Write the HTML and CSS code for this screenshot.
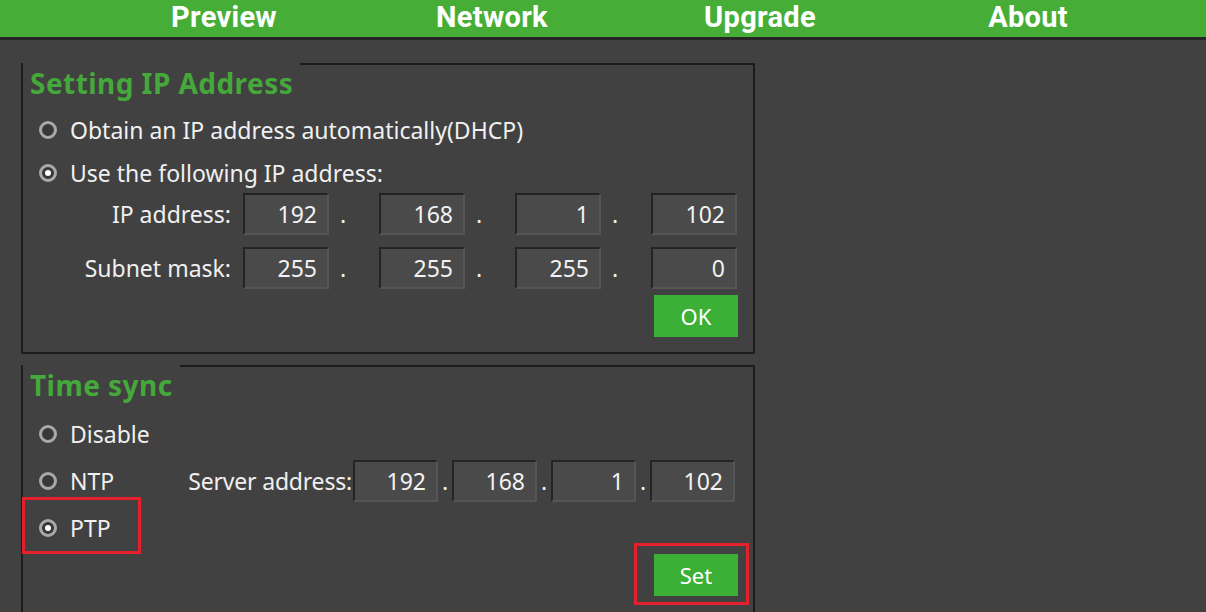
FILE: index.html
```html
<!DOCTYPE html>
<html>
<head>
<meta charset="utf-8">
<link rel="stylesheet" href="styles.css">
</head>
<body>
<header class="topbar">
  <nav class="nav">
    <span class="nav-item">Preview</span>
    <span class="nav-item">Network</span>
    <span class="nav-item">Upgrade</span>
    <span class="nav-item">About</span>
  </nav>
</header>
<main class="main">
  <section class="group group-ip">
    <div class="legend"><span class="legend-title">Setting IP Address</span><span class="legend-line"></span></div>
    <div class="radio-row first"><span class="radio"></span><span>Obtain an IP address automatically(DHCP)</span></div>
    <div class="radio-row"><span class="radio checked"></span><span>Use the following IP address:</span></div>
    <div class="ip-grid">
      <span class="ip-label">IP address:</span>
      <span class="field">192</span><span class="dot">.</span>
      <span class="field">168</span><span class="dot">.</span>
      <span class="field">1</span><span class="dot">.</span>
      <span class="field">102</span>
      <span class="ip-label">Subnet mask:</span>
      <span class="field">255</span><span class="dot">.</span>
      <span class="field">255</span><span class="dot">.</span>
      <span class="field">255</span><span class="dot">.</span>
      <span class="field">0</span>
    </div>
    <div class="btn-row"><span class="btn">OK</span></div>
  </section>
  <section class="group group-time">
    <div class="legend"><span class="legend-title">Time sync</span><span class="legend-line"></span></div>
    <div class="radio-row tall first"><span class="radio"></span><span>Disable</span></div>
    <div class="radio-row tall">
      <span class="radio-opt fixed"><span class="radio"></span><span>NTP</span></span>
      <span class="server-label">Server address:</span>
      <span class="server-fields">
        <span class="field small">192</span><span class="sdot">.</span>
        <span class="field small">168</span><span class="sdot">.</span>
        <span class="field small">1</span><span class="sdot">.</span>
        <span class="field small">102</span>
      </span>
    </div>
    <div class="radio-row tall"><span class="radio-opt mark-ptp"><span class="radio checked"></span><span>PTP</span></span></div>
    <div class="btn-row set-row"><span class="btn mark-set">Set</span></div>
  </section>
</main>
</body>
</html>
```
FILE: styles.css
```css
* { box-sizing: border-box; }
html, body { margin: 0; padding: 0; }
body {
  background: #414141;
  color: #f0f0f0;
  font-family: "Noto Sans", "Open Sans", "DejaVu Sans", sans-serif;
  font-size: 23px;
  line-height: 30px;
  width: 1206px;
  height: 612px;
  overflow: hidden;
}
.topbar {
  height: 40px;
  background: #46ae37;
  border-bottom: 3px solid #262626;
}
.nav {
  display: grid;
  grid-template-columns: repeat(4, 268px);
  padding-left: 90px;
  height: 37px;
  align-items: start;
}
.nav-item {
  text-align: center;
  color: #ffffff;
  font-family: Roboto, "Noto Sans", sans-serif;
  font-weight: 700;
  font-size: 29px;
  line-height: 34px;
  letter-spacing: 0.3px;
}
.main {
  padding: 23px 0 0 21px;
  display: flex;
  flex-direction: column;
  gap: 11px;
}
.group {
  width: 734px;
  border: 2px solid #1c1c1c;
  border-top: none;
  position: relative;
}
.group-ip { height: 291px; }
.group-time { height: 300px; }
.legend {
  display: flex;
  align-items: flex-start;
  height: 40px;
  margin-left: -2px;
  margin-right: -2px;
}
.legend-title {
  color: #45a83a;
  font-weight: 700;
  font-size: 28px;
  line-height: 40px;
  letter-spacing: 0.45px;
  padding: 0 7px 0 7px;
  border-left: 2px solid #1c1c1c;
  height: 40px;
  white-space: nowrap;
}
.legend-line {
  flex: 1;
  border-top: 2px solid #1c1c1c;
  border-right: 2px solid #1c1c1c;
  height: 40px;
}
.radio-row {
  display: flex;
  align-items: center;
  height: 43px;
  padding-left: 16px;
  white-space: nowrap;
}
.radio-row.first { margin-top: 5px; }
.radio-row.tall { height: 47px; }
.radio-opt {
  display: inline-flex;
  align-items: center;
}
.radio-opt.fixed { width: 74px; }
.radio {
  width: 18px;
  height: 18px;
  border-radius: 50%;
  border: 3px solid #a9a9a9;
  background: #383838;
  margin-right: 13px;
  flex: none;
  display: inline-flex;
  align-items: center;
  justify-content: center;
}
.radio.checked::after {
  content: "";
  width: 6px;
  height: 6px;
  border-radius: 50%;
  background: #ffffff;
}
.ip-grid {
  display: grid;
  grid-template-columns: 220px 86px 50px 86px 50px 86px 50px 86px;
  row-gap: 12px;
  margin-top: -1px;
  align-items: center;
}
.ip-label {
  text-align: right;
  padding-right: 12px;
  white-space: nowrap;
}
.field {
  height: 42px;
  background: #4a4a4a;
  border-top: 2px solid #242424;
  border-left: 2px solid #242424;
  border-right: 2px solid #555555;
  border-bottom: 2px solid #555555;
  text-align: right;
  padding-right: 10px;
  font-size: 23px;
  line-height: 38px;
  color: #f2f2f2;
}
.dot {
  padding-left: 11px;
}
.btn-row {
  display: flex;
  justify-content: flex-end;
  padding-right: 15px;
  margin-top: 6px;
}
.btn {
  width: 84px;
  height: 42px;
  background: #3caf37;
  color: #ffffff;
  display: flex;
  align-items: center;
  justify-content: center;
  font-size: 22px;
}
.server-label {
  width: 240px;
  text-align: right;
  padding-right: 1px;
  letter-spacing: -0.2px;
}
.server-fields {
  display: flex;
  align-items: center;
}
.field.small { width: 85px; }
.sdot {
  width: 14px;
  text-align: center;
}
.set-row { margin-top: 3px; }
.mark-ptp { position: relative; }
.mark-ptp::after {
  content: "";
  position: absolute;
  left: -17px;
  right: -30px;
  top: -16px;
  bottom: -11px;
  border: 3px solid #e3202b;
}
.mark-set { position: relative; }
.mark-set::after {
  content: "";
  position: absolute;
  left: -20px;
  right: -11px;
  top: -11px;
  bottom: -9px;
  border: 3px solid #e3202b;
}
```
